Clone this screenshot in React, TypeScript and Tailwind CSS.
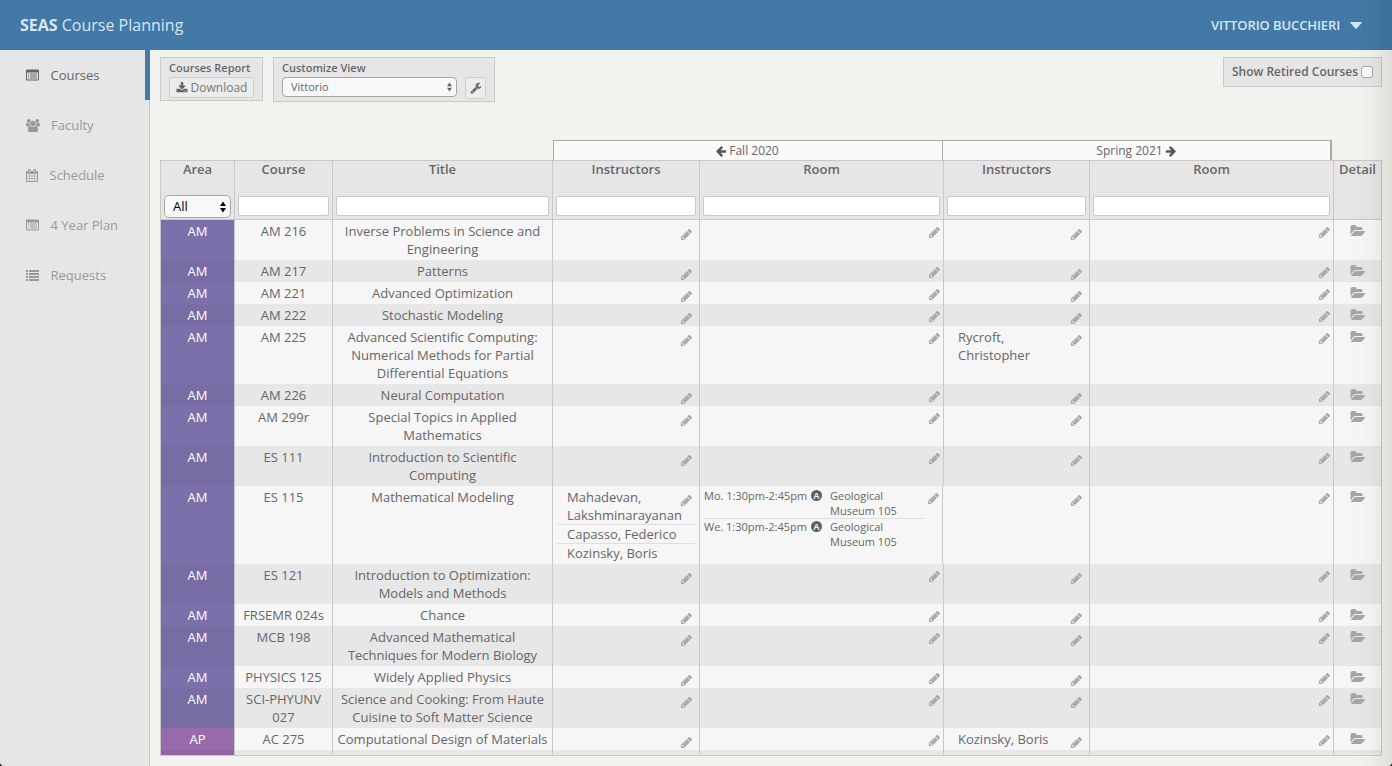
import React from "react";

type IconProps = { d: string; className?: string; viewBox?: string };

function Icon({ d, className = "", viewBox = "0 0 1792 1792" }: IconProps) {
  return (
    <svg viewBox={viewBox} className={`block shrink-0 overflow-visible ${className}`} fill="currentColor" aria-hidden="true">
      <path d={d} />
    </svg>
  );
}

const PENCIL =
  "M491 1536l91-91-235-235-91 91v107h128v128h107zm523-928q0-22-22-22-10 0-17 7l-542 542q-7 7-7 17 0 22 22 22 10 0 17-7l542-542q7-7 7-17zm-54-192l416 416-832 832h-416v-416zm683 96q0 53-37 90l-166 166-416-416 166-165q36-38 90-38 53 0 91 38l235 234q37 39 37 91z";
const FOLDER =
  "M1815 952q0 31-31 66l-336 396q-43 51-120.5 86.5t-143.5 35.5h-1088q-34 0-60.5-13t-26.5-43q0-31 31-66l336-396q43-51 120.5-86.5t143.5-35.5h1088q34 0 60.5 13t26.5 43zm-343-344v160h-832q-94 0-197 47.5t-164 119.5l-337 396-5 6q0-4-.5-12.5t-.5-12.5v-960q0-92 66-158t158-66h320q92 0 158 66t66 158v32h544q92 0 158 66t66 158z";
const USERS =
  "M529 896q-162 5-265 128h-134q-82 0-138-40.5t-56-118.5q0-353 124-353 6 0 43.5 21t97.5 42.5 119 21.5q67 0 133-23-5 37-5 66 0 139 81 256zm1071 637q0 120-73 189.5t-194 69.5h-874q-121 0-194-69.5t-73-189.5q0-53 3.5-103.5t14-109 26.5-108.5 43-97.5 62-81 85.5-53.5 111.5-20q10 0 43 21.5t73 48 107 48 135 21.5 135-21.5 107-48 73-48 43-21.5q61 0 111.5 20t85.5 53.5 62 81 43 97.5 26.5 108.5 14 109 3.5 103.5zm-1024-1277q0 106-75 181t-181 75-181-75-75-181 75-181 181-75 181 75 75 181zm704 384q0 159-112.5 271.5t-271.5 112.5-271.5-112.5-112.5-271.5 112.5-271.5 271.5-112.5 271.5 112.5 112.5 271.5zm576 225q0 78-56 118.5t-138 40.5h-134q-103-123-265-128 81-117 81-256 0-29-5-66 66 23 133 23 59 0 119-21.5t97.5-42.5 43.5-21q124 0 124 353zm-128-609q0 106-75 181t-181 75-181-75-75-181 75-181 181-75 181 75 75 181z";
const CALENDAR =
  "M192 1664h288v-288h-288v288zm352 0h320v-288h-320v288zm-352-352h288v-320h-288v320zm352 0h320v-320h-320v320zm-352-384h288v-288h-288v288zm736 736h320v-288h-320v288zm-384-736h320v-288h-320v288zm768 736h288v-288h-288v288zm-384-352h320v-320h-320v320zm-352-864v-288q0-13-9.5-22.5t-22.5-9.5h-64q-13 0-22.5 9.5t-9.5 22.5v288q0 13 9.5 22.5t22.5 9.5h64q13 0 22.5-9.5t9.5-22.5zm736 864h288v-320h-288v320zm-384-384h320v-288h-320v288zm384 0h288v-288h-288v288zm32-480v-288q0-13-9.5-22.5t-22.5-9.5h-64q-13 0-22.5 9.5t-9.5 22.5v288q0 13 9.5 22.5t22.5 9.5h64q13 0 22.5-9.5t9.5-22.5zm384-64v1280q0 52-38 90t-90 38h-1408q-52 0-90-38t-38-90v-1280q0-52 38-90t90-38h128v-96q0-66 47-113t113-47h64q66 0 113 47t47 113v96h384v-96q0-66 47-113t113-47h64q66 0 113 47t47 113v96h128q52 0 90 38t38 90z";
const LIST_ALT =
  "M2 4.5h1v1H2zM2 6.5h1v1H2zM2 8.5h1v1H2zM4 4.5h7v1H4zM4 6.5h7v1H4zM4 8.5h7v1H4zM1 0.5H12Q13 0.5 13 1.5V10.5Q13 11.5 12 11.5H1Q0 11.5 0 10.5V1.5Q0 0.5 1 0.5zM1 3.5V10.5H12V3.5z";
const LIST =
  "M0 1h2v2H0zM3 1h10v2H3zM0 4h2v2H0zM3 4h10v2H3zM0 7h2v2H0zM3 7h10v2H3zM0 10h2v2H0zM3 10h10v2H3z";
const DOWNLOAD =
  "M1344 1344q0-26-19-45t-45-19-45 19-19 45 19 45 45 19 45-19 19-45zm256 0q0-26-19-45t-45-19-45 19-19 45 19 45 45 19 45-19 19-45zm128-224v320q0 40-28 68t-68 28h-1472q-40 0-68-28t-28-68v-320q0-40 28-68t68-28h465l135 136q58 56 136 56t136-56l136-136h464q40 0 68 28t28 68zm-325-569q17 41-14 70l-448 448q-18 19-45 19t-45-19l-448-448q-31-29-14-70 17-39 59-39h256v-448q0-26 19-45t45-19h256q26 0 45 19t19 45v448h256q42 0 59 39z";
const WRENCH =
  "M448 1472q0-26-19-45t-45-19-45 19-19 45 19 45 45 19 45-19 19-45zm644-420l-682 682q-37 37-90 37-52 0-91-37l-106-108q-38-36-38-90 0-53 38-91l681-681q39 98 114.5 173.5t173.5 114.5zm634-435q0 39-23 106-47 134-164.5 217.5t-258.5 83.5q-185 0-316.5-131.5t-131.5-316.5 131.5-316.5 316.5-131.5q58 0 121.5 16.5t107.5 46.5q16 11 16 28t-16 28l-293 169v224l193 107q5-3 79-48.5t135.5-81 70.5-35.5q15 0 23.5 10t8.5 25z";
const ARROW =
  "M1664 896v128q0 53-32.5 90.5t-84.5 37.5h-704l293 294q38 36 38 90t-38 90l-75 76q-37 37-90 37-52 0-91-37l-651-652q-37-37-37-90 0-52 37-91l651-650q38-38 91-38 52 0 90 38l75 74q38 38 38 91t-38 91l-293 293h704q52 0 84.5 37.5t32.5 90.5z";

function Sorter({ className = "" }: { className?: string }) {
  return <Icon viewBox="0 0 6 12" className={className} d="M0 5L3 0.5L6 5zM0 7L3 11.5L6 7z" />;
}

type Meeting = { time: string; room: string };
type Course = {
  area: "AM" | "AP";
  code: string;
  title: string;
  height: string;
  fall?: string[];
  spring?: string[];
  meetings?: Meeting[];
};

const courses: Course[] = [
  { area: "AM", code: "AM 216", title: "Inverse Problems in Science and Engineering", height: "h-[40px]" },
  { area: "AM", code: "AM 217", title: "Patterns", height: "h-[22px]" },
  { area: "AM", code: "AM 221", title: "Advanced Optimization", height: "h-[22px]" },
  { area: "AM", code: "AM 222", title: "Stochastic Modeling", height: "h-[22px]" },
  { area: "AM", code: "AM 225", title: "Advanced Scientific Computing: Numerical Methods for Partial Differential Equations", height: "h-[58px]", spring: ["Rycroft, Christopher"] },
  { area: "AM", code: "AM 226", title: "Neural Computation", height: "h-[22px]" },
  { area: "AM", code: "AM 299r", title: "Special Topics in Applied Mathematics", height: "h-[40px]" },
  { area: "AM", code: "ES 111", title: "Introduction to Scientific Computing", height: "h-[40px]" },
  {
    area: "AM",
    code: "ES 115",
    title: "Mathematical Modeling",
    height: "h-[78px]",
    fall: ["Mahadevan, Lakshminarayanan", "Capasso, Federico", "Kozinsky, Boris"],
    meetings: [
      { time: "Mo. 1:30pm-2:45pm", room: "Geological Museum 105" },
      { time: "We. 1:30pm-2:45pm", room: "Geological Museum 105" },
    ],
  },
  { area: "AM", code: "ES 121", title: "Introduction to Optimization: Models and Methods", height: "h-[40px]" },
  { area: "AM", code: "FRSEMR 024s", title: "Chance", height: "h-[22px]" },
  { area: "AM", code: "MCB 198", title: "Advanced Mathematical Techniques for Modern Biology", height: "h-[40px]" },
  { area: "AM", code: "PHYSICS 125", title: "Widely Applied Physics", height: "h-[22px]" },
  { area: "AM", code: "SCI-PHYUNV 027", title: "Science and Cooking: From Haute Cuisine to Soft Matter Science", height: "h-[40px]" },
  { area: "AP", code: "AC 275", title: "Computational Design of Materials", height: "h-[22px]", spring: ["Kozinsky, Boris"] },
];

const cell = "border-r border-[#c8c8c8]";

function Instructors({ names = [] }: { names?: string[] }) {
  return (
    <div className={`${cell} flex justify-between pt-[2px]`}>
      <div className="ml-1 w-[138px] shrink-0">
        {names.map((name, i) => (
          <div key={name} className={`pl-[10px] leading-[18px] ${i < names.length - 1 ? "border-b border-[#dedede]" : ""}`}>
            <div className={name.startsWith("Rycroft") || name.startsWith("Maha") ? "w-[100px]" : "whitespace-nowrap"}>{name}</div>
          </div>
        ))}
      </div>
      <Icon d={PENCIL} className="-ml-[20px] mr-[6.5px] mt-[6px] size-[13px] text-[#a6a6a6]" />
    </div>
  );
}

function Room({ meetings = [] }: { meetings?: Meeting[] }) {
  return (
    <div className={`${cell} flex justify-between`}>
      <div className="ml-1 pt-[2px] text-[11px] leading-[15px]">
        {meetings.map((m, i) => (
          <div key={m.time} className={`flex w-[220px] ${i === 0 ? "border-b border-[#dedede]" : ""}`}>
            <span className="w-[107px] shrink-0 whitespace-nowrap">{m.time}</span>
            <span className="mt-[2px] flex size-[11px] shrink-0 items-center justify-center rounded-full bg-[#5f5f5f] text-[9px] font-semibold leading-none text-white">
              A
            </span>
            <span className="ml-2 w-[80px]">{m.room}</span>
          </div>
        ))}
      </div>
      <Icon d={PENCIL} className="mr-[2px] mt-[6px] size-[13px] text-[#a6a6a6]" />
    </div>
  );
}

const grid = "grid grid-cols-[74px_98px_220px_147px_244px_146px_244px_47px]";
const gridNarrow = "grid grid-cols-[74px_98px_220px_147px_243px_147px_244px_47px]";

function areaColor(area: string, odd: boolean) {
  if (area === "AP") return odd ? "bg-[#9264a5]" : "bg-[#976bab]";
  return odd ? "bg-[#786ca5]" : "bg-[#7c70aa]";
}

function Row({ course, odd }: { course: Course; odd: boolean }) {
  return (
    <div className={`${course.meetings ? gridNarrow : grid} ${course.height} leading-[18px] ${odd ? "bg-[#e7e7e7]" : "bg-[#f6f6f6]"}`}>
      <div className={`${cell} ${areaColor(course.area, odd)} pt-[2px] text-center text-white`}>{course.area}</div>
      <div className={`${cell} px-1 pt-[2px] text-center`}>{course.code}</div>
      <div className={`${cell} px-1 pt-[2px] text-center`}>{course.title}</div>
      <Instructors names={course.fall} />
      <Room meetings={course.meetings} />
      <Instructors names={course.spring} />
      <Room />
      <div className="flex justify-center pt-[4px]">
        <Icon d={FOLDER} className="size-[14px] text-[#a6a6a6]" />
      </div>
    </div>
  );
}

const headers = ["Area", "Course", "Title", "Instructors", "Room", "Instructors", "Room", "Detail"];

const nav = [
  { label: "Courses", icon: LIST_ALT, gap: "ml-[11.5px]", size: "h-[13px] w-[13px]", viewBox: "0 0 13 13" },
  { label: "Faculty", icon: USERS, gap: "ml-[11px]", size: "h-[13px] w-[14px]", viewBox: "-64 0 1920 1792" },
  { label: "Schedule", icon: CALENDAR, gap: "ml-[11.5px]", size: "h-[13px] w-[12px]", viewBox: "64 0 1664 1792" },
  { label: "4 Year Plan", icon: LIST_ALT, gap: "ml-[11.5px]", size: "h-[13px] w-[13px]", viewBox: "0 0 13 13" },
  { label: "Requests", icon: LIST, gap: "ml-[11.5px]", size: "h-[13px] w-[13px]", viewBox: "0 0 13 13" },
];

export default function App() {
  return (
    <div className="relative flex h-[766px] w-[1392px] flex-col overflow-hidden bg-[#f2f3ee] font-['Open_Sans',sans-serif] text-[13px] text-[#666]">
      <header className="flex h-[50px] shrink-0 items-center justify-between bg-[#4279a6] pl-5 pr-[30px] text-[#d8e6f3]">
        <h1 className="text-[16px]">
          <b className="font-bold">SEAS</b> Course Planning
        </h1>
        <div className="flex items-center gap-[8px] text-[13px]">
          <span className="w-[131px] whitespace-nowrap pt-[2px] font-semibold tracking-[-0.1px]">VITTORIO BUCCHIERI</span>
          <Icon viewBox="0 0 12 7" className="h-[7px] w-[12px]" d="M0.8 0H11.2Q12.3 0.2 11.6 1L6.6 6.4Q6 7 5.4 6.4L0.4 1Q-0.3 0.2 0.8 0z" />
        </div>
      </header>

      <div className="flex min-h-0 flex-1">
        <nav className="w-[150px] shrink-0 border-r border-[#c8c8c8] bg-[#e6e6e6]">
          {nav.map((item, i) => (
            <div
              key={item.label}
              className={`flex h-[50px] items-center pl-[26px] ${i === 0 ? "-mr-px border-r-[5px] border-[#4279a6] text-[#666]" : "text-[#999]"}`}
            >
              <Icon d={item.icon} viewBox={item.viewBox} className={item.size} />
              <span className={`pt-[2px] ${item.gap}`}>{item.label}</span>
            </div>
          ))}
        </nav>

        <main className="flex flex-1 flex-col pl-[10px] pr-[10px] pt-[7px]">
          <div className="flex h-[83px] items-start">
            <section className="h-[44px] w-[103px] border border-[#c8c8c8] bg-[#e6e6e6] pl-[8px] pt-[2px]">
              <h2 className="whitespace-nowrap pb-[2px] text-[11px] font-semibold leading-[15px]">Courses Report</h2>
              <button className="flex h-[21px] w-[85px] items-center justify-center gap-[3px] rounded-[2px] border border-[#cfcfcf] bg-[#ececec] text-[12px] text-[#777]">
                <Icon d={DOWNLOAD} className="size-[12px] text-[#666]" />
                Download
              </button>
            </section>
            <section className="ml-[10px] h-[45px] w-[222px] border border-[#c8c8c8] bg-[#e6e6e6] pl-[8px] pt-[2px]">
              <h2 className="pb-[2px] text-[11px] font-semibold leading-[15px]">Customize View</h2>
              <div className="flex items-start">
                <div className="flex h-[20px] w-[175px] items-center justify-between rounded-[4px] border border-[#a6a6a6] bg-[#f8f8f8] pl-[8px] pr-[4px] text-[11px]">
                  <span>Vittorio</span>
                  <Sorter className="h-[10px] w-[5px]" />
                </div>
                <button className="ml-[8px] flex h-[22px] w-[21px] items-center justify-center rounded-[2px] border border-[#cfcfcf] bg-[#ececec]">
                  <Icon d={WRENCH} className="size-[12px]" />
                </button>
              </div>
            </section>
            <label className="ml-auto flex h-[30px] w-[159px] items-center border border-[#c8c8c8] bg-[#e6e6e6] pl-[8px] text-[12px] font-semibold">
              <span className="whitespace-nowrap">Show Retired Courses</span>
              <span className="ml-[3px] size-[12px] shrink-0 rounded-[3px] border border-[#a6a6a6] bg-white" />
            </label>
          </div>

          <div className="ml-[393px] flex h-[20px] w-[779px] shrink-0 border-l border-r-2 border-t border-[#a9a9a9] bg-[#fafafa] text-[12px]">
            <div className="flex w-[389px] items-center justify-center gap-[2px] border-r border-[#a9a9a9] pr-[2px]">
              <Icon d={ARROW} className="size-[12px] text-[#555]" />
              Fall 2020
            </div>
            <div className="flex flex-1 items-center justify-center gap-[2px]">
              Spring 2021
              <Icon d={ARROW} className="size-[12px] -scale-x-100 text-[#555]" />
            </div>
          </div>

          <div className="flex h-[596px] w-[1222px] shrink-0 flex-col overflow-hidden border border-[#c8c8c8]">
            <div className={`${grid} h-[59px] shrink-0 border-b border-[#c8c8c8] bg-[#e6e6e6]`}>
              {headers.map((h, i) => (
                <div key={i} className={`flex flex-col px-[3px] text-center font-semibold leading-[16px] ${i < 7 ? cell : ""}`}>
                  <span className="-mx-1">{h}</span>
                  {i === 0 && (
                    <div className="mt-[18px] flex h-[23px] w-[67px] items-center justify-between rounded-[5px] border border-[#a6a6a6] bg-[#f8f8f8] pl-[8px] pr-[4px] font-normal text-black">
                      <span className="pb-px">All</span>
                      <Sorter className="h-[12px] w-[6px]" />
                    </div>
                  )}
                  {i > 0 && i < 7 && <div className="mt-[19px] h-[20px] rounded-[2px] border border-[#c8c8c8] bg-white" />}
                </div>
              ))}
            </div>
            {courses.map((c, i) => (
              <Row key={c.code} course={c} odd={i % 2 === 1} />
            ))}
            <div className={`${grid} h-[5px] shrink-0 bg-[#e7e7e7]`}>
              {headers.map((_, i) => (
                <div key={i} className={`${i < 7 ? cell : ""} ${i === 0 ? "bg-[#9264a5]" : ""}`} />
              ))}
            </div>
          </div>
        </main>
      </div>

      <div className="pointer-events-none absolute inset-y-0 right-0 w-[42px] bg-linear-to-r from-transparent via-black/2 to-black/8" />
      <svg viewBox="0 0 4 4" className="absolute bottom-0 left-0 size-[4px]" aria-hidden="true">
        <path d="M0 0Q0 4 4 4H0z" fill="#111" />
      </svg>
      <svg viewBox="0 0 4 4" className="absolute bottom-0 right-0 size-[4px]" aria-hidden="true">
        <path d="M4 0Q4 4 0 4H4z" fill="#1b1028" />
      </svg>
    </div>
  );
}
